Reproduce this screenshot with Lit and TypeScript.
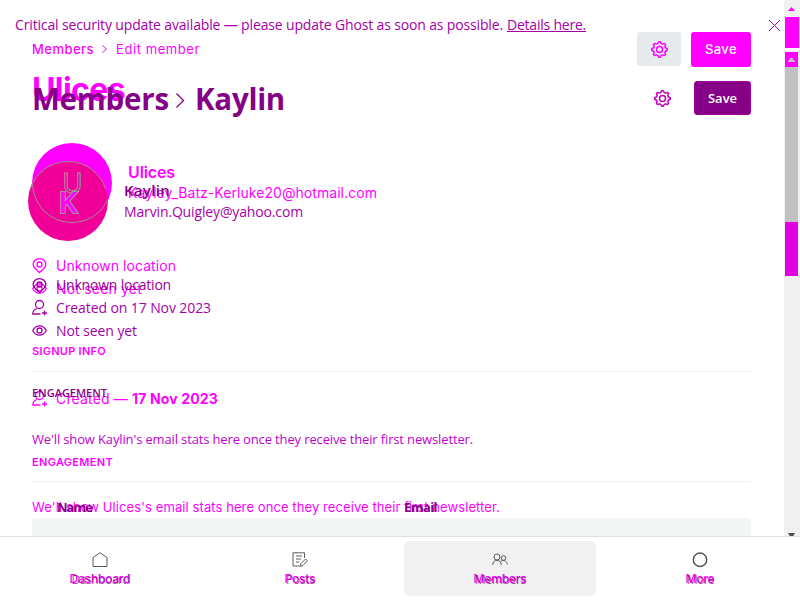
import { LitElement, html, css, svg } from "lit";
import { customElement, property } from "lit/decorators.js";

/* A single line of text whose tracking is computed so that it spans a given width. */
@customElement("fit-text")
class FitText extends LitElement {
  @property({ type: Number }) span = 0;
  @property() text = "";
  static styles = css`
    :host { display: block; flex: none; white-space: pre; line-height: 20px; height: 20px; }
    span { display: inline-block; text-decoration: inherit; }
  `;
  render() {
    return html`<span>${this.text}</span>`;
  }
  updated() {
    const el = this.renderRoot.querySelector("span") as HTMLElement;
    el.style.letterSpacing = "0px";
    const w = el.getBoundingClientRect().width;
    el.style.letterSpacing = `${(this.span - w) / this.text.length}px`;
  }
}

const t = (text: string, span: number, cls = "") =>
  html`<fit-text class=${cls} .text=${text} .span=${span}></fit-text>`;

const gearPath = () => {
  let d = "";
  const n = 8;
  for (let i = 0; i < n * 4; i++) {
    const a = ((i - 0.5) / (n * 4)) * Math.PI * 2;
    const r = i % 4 < 2 ? 7.8 : 6.1;
    d += `${i ? "L" : "M"}${(8.5 + r * Math.cos(a)).toFixed(2)} ${(8.5 + r * Math.sin(a)).toFixed(2)}`;
  }
  return d + "Z";
};
const gear = html`<svg class="gear" viewBox="0 0 17 17"><path d=${gearPath()} stroke-linejoin="round"/><circle cx="8.5" cy="8.5" r="3"/></svg>`;
const icons = {
  pin: svg`<path d="M7.500 14.500C4.600 11.800 1.200 9.600 1.200 6.500A6.300 5.900 0 0 1 13.800 6.500C13.800 9.600 10.400 11.800 7.500 14.500Z"/><circle cx="7.500" cy="6.500" r="2.500"/>`,
  user: svg`<circle cx="7.500" cy="4.500" r="4"/><path d="M5 8.500C2 9.500 .8 11.500 .8 14H8.500M12.500 10.500v5M10 13h5"/>`,
  eye: svg`<path d="M.7 7.500C4 1.300 11 1.300 14.300 7.500C11 13.700 4 13.700 .7 7.500Z"/><circle cx="7.500" cy="7.500" r="2.500"/>`,
};
const icon = (k: keyof typeof icons) => html`<svg class="icon" viewBox="0 0 15 16">${icons[k]}</svg>`;

@customElement("app-root")
class AppRoot extends LitElement {
  static styles = css`
    :host { display: block; position: relative; width: 800px; height: 600px; overflow: hidden; background: #fff; }
    svg { display: block; flex: none; fill: none; stroke: currentColor; overflow: visible; }
    .layer { position: absolute; inset: 0; display: flex; flex-direction: column; box-sizing: border-box; padding-left: 32px; }
    .next { color: #f0f; font-family: Inter, sans-serif; font-size: 14px; padding-top: 32px; }
    .prev { color: #a500a8; font-family: "Open Sans", sans-serif; font-size: 14px; padding-top: 15px; }
    .row { display: flex; align-items: center; height: 20px; flex: none; }
    .s11 { font-size: 11px; font-weight: 600; }
    .s13 { font-size: 13px; }
    .bold { font-weight: 700; }
    .semi { font-weight: 600; }
    .med { font-weight: 500; }
    .gear { width: 17px; height: 17px; stroke-width: 1.5; }
    .icon { width: 15px; height: 16px; stroke-width: 1.3; margin-right: 9px; }
    .rule { height: 1px; width: 719px; background: #f0f1f1; flex: none; }
    .chev { width: 5px; height: 8px; }

    .next .bar { display: flex; height: 34px; width: 719px; align-items: center; flex: none; }
    .next .chev { margin: 0 9px 0 8px; }
    .btn { display: flex; align-items: center; justify-content: center; box-sizing: border-box; color: #fff; }
    .tool { width: 44px; height: 34px; background: #e6eaed; color: #f0f; border-radius: 3px; margin-left: auto; margin-right: 10px; }
    .save { width: 60px; height: 35px; background: #f0f; border-radius: 3px; }
    .next .title { font-size: 32px; font-weight: 700; margin-top: 14px; }
    .next .name { font-size: 16px; font-weight: 600; margin: 62px 0 0 96px; }
    .next .mail { margin-left: 96px; margin-top: 1px; }
    .next .loc { margin-top: 53px; }
    .next .seen { margin-top: 3px; }
    .next .signup { margin-top: 42px; }
    .next .r1 { margin-top: 10px; }
    .next .made { margin-top: 17px; }
    .next .made .bold { margin-left: 4px; }
    .next .eng { margin-top: 43px; }
    .next .r2 { margin-top: 9px; }
    .next .msg { margin-top: 15px; }
    .panel { width: 719px; height: 20px; background: #f4f6f6; border-radius: 3px 3px 0 0; flex: none; margin-top: 1px; }

    .prev .alert { margin-left: -17px; }
    .prev .link { margin-left: 4px; text-decoration: underline; }
    .x { width: 11px; height: 11px; margin-left: 183px; }
    .prev .head { height: 34px; width: 719px; margin-top: 46px; color: #850087; }
    .prev .head .big { font-size: 29.500px; font-weight: 700; margin-top: 1px; }
    .prev .head .chev { width: 8px; height: 15px; margin: 4px 11px 0 7px; stroke-width: 1.300; }
    .prev .head .gear { margin-left: auto; margin-right: 23px; color: #c000c0; }
    .prev .save { width: 57px; height: 34px; background: #850087; border: 1px solid #a000a2; }
    .prev .name { font-size: 15px; font-weight: 600; margin: 65px 0 0 92px; color: #850087; }
    .prev .mail { font-size: 14px; margin: 2px 0 0 92px; }
    .prev .loc { margin-top: 53px; color: #980098; }
    .prev .loc svg { margin-top: 1px; }
    .prev .gap3 { margin-top: 3px; }
    .prev .eng { margin-top: 42px; color: #850087; }
    .prev .msg { margin-top: 26px; color: #c000d0; }
    .prev .cols { margin-top: 48px; padding-left: 25px; color: #850087; }
    .prev .cols .mailcol { margin-left: 312px; }

    .avatars { position: absolute; left: 28px; top: 143px; width: 84px; height: 98px; }
    .avatars .a { fill: #f0f; stroke: none; }
    .avatars .b { fill: #f00098; stroke: none; }
    .avatars .ring { stroke: #a58a9c; stroke-width: 1; }
    .avatars .u { font: 400 27px Inter, sans-serif; stroke: #999; fill: #f00098; }
    .avatars .k { font: 600 29px "Open Sans", sans-serif; stroke: #999; stroke-width: 2; fill: #f0f; paint-order: stroke; }

    .scroll { position: absolute; right: 0; top: 0; width: 16px; height: 536px; background: #f0f0f0; display: flex; flex-direction: column; align-items: flex-start; box-sizing: border-box; padding: 7px 0 0 1px; }
    .up { width: 7px; height: 4px; margin: 0 0 6px 3px; background: #f0f; clip-path: polygon(50% 0, 100% 100%, 0 100%); }
    .t1 { width: 14px; height: 31px; background: #f0f; }
    .split { width: 16px; height: 2px; background: #fff; margin: 0 0 2px -1px; }
    .t2 { width: 13px; height: 15px; background: #f0f; display: flex; justify-content: center; align-items: center; }
    .t2 i { width: 8px; height: 5px; background: #c1c1c1; clip-path: polygon(50% 0, 100% 100%, 0 100%); }
    .t3 { width: 13px; height: 155px; background: #c1c1c1; }
    .t4 { width: 13px; height: 54px; background: #e000e0; }
    .down { width: 7px; height: 3px; background: #505050; margin: 257px 0 0 3px; clip-path: polygon(0 0, 100% 0, 75% 100%, 25% 100%); }

    .nav { position: absolute; left: 0; right: 0; bottom: 0; height: 64px; box-sizing: border-box; border-top: 1px solid #dcdfe2; background: #fff; display: grid; grid-template-columns: repeat(4, 1fr); padding-top: 4px; }
    .tab { margin: 0 4px; height: 55px; border-radius: 5px; display: flex; flex-direction: column; align-items: center; color: #565b61; padding-top: 11px; box-sizing: border-box; }
    .tab.on { background: #f2f2f2; }
    .tab svg { width: 16px; height: 16px; }
    .label { display: grid; justify-items: center; margin-top: 1px; font-size: 12px; }
    .label fit-text { grid-area: 1 / 1; }
    .la { color: #f0f; font-family: Inter, sans-serif; font-weight: 500; }
    .lb { color: #85108a; font-family: "Open Sans", sans-serif; opacity: .75; margin: 1px 0 -1px 1px; }
  `;

  tab(label: string, a: number, b: number, glyph: unknown, on = false) {
    return html`<div class="tab ${on ? "on" : ""}">
      <svg viewBox="0 0 16 16">${glyph}</svg>
      <div class="label">${t(label, a, "la")}${t(label, b, "lb")}</div>
    </div>`;
  }

  render() {
    const chev = html`<svg class="chev" viewBox="0 0 5 8"><path d="M.5 .5L4.500 4L.5 7.500"/></svg>`;
    return html`
      <div class="layer next">
        <div class="bar">
          ${t("Members", 62, "s13 med")}${chev}${t("Edit member", 84, "s13")}
          <div class="btn tool">${gear}</div>
          <div class="btn save">${t("Save", 32, "s13 med")}</div>
        </div>
        ${t("Ulices", 93, "title")}
        ${t("Ulices", 47, "name")}
        ${t("Kayley_Batz-Kerluke20@hotmail.com", 249, "mail")}
        <div class="row loc">${icon("pin")}${t("Unknown location", 120)}</div>
        <div class="row seen">${icon("eye")}${t("Not seen yet", 86)}</div>
        ${t("SIGNUP INFO", 74, "s11 signup")}
        <div class="rule r1"></div>
        <div class="row made">${icon("user")}${t("Created —", 72)}${t("17 Nov 2023", 86, "bold")}</div>
        ${t("ENGAGEMENT", 81, "s11 eng")}
        <div class="rule r2"></div>
        ${t("We'll show Ulices's email stats here once they receive their first newsletter.", 468, "s13 msg")}
        <div class="panel"></div>
      </div>

      <div class="layer prev">
        <div class="row alert">
          ${t("Critical security update available — please update Ghost as soon as possible.", 488)}
          ${t("Details here.", 79, "link")}
          <svg class="x" viewBox="0 0 11 11"><path d="M0 0L11 11M11 0L0 11"/></svg>
        </div>
        <div class="row head">
          ${t("Members", 137, "big")}
          <svg class="chev" viewBox="0 0 8 15"><path d="M.5 .5L7.500 7.500L.5 14.500"/></svg>
          ${t("Kaylin", 90, "big")}
          ${gear}
          <div class="btn save">${t("Save", 29, "semi s13")}</div>
        </div>
        ${t("Kaylin", 46, "name")}
        ${t("Marvin.Quigley@yahoo.com", 179, "mail")}
        <div class="row loc">${icon("pin")}${t("Unknown location", 115)}</div>
        <div class="row gap3">${icon("user")}${t("Created on 17 Nov 2023", 155)}</div>
        <div class="row gap3">${icon("eye")}${t("Not seen yet", 81)}</div>
        ${t("ENGAGEMENT", 75, "s11 eng")}
        ${t("We'll show Kaylin's email stats here once they receive their first newsletter.", 441, "s13 msg")}
        <div class="row cols">${t("Name", 35, "s13 bold")}${t("Email", 33, "s13 bold mailcol")}</div>
      </div>

      <svg class="avatars" viewBox="0 0 84 98">
        <defs><clipPath id="in"><circle cx="40" cy="58" r="40"/></clipPath></defs>
        <circle class="a" cx="44" cy="40" r="40"/>
        <circle class="b" cx="40" cy="58" r="40"/>
        <circle class="ring" cx="44" cy="40" r="39.500" clip-path="url(#in)"/>
        <circle class="ring" cx="40" cy="58" r="39.500" stroke-dasharray="100 148" stroke-dashoffset="-136"/>
        <text class="u" x="34.500" y="50">U</text>
        <text class="k" x="30.500" y="69.500" textLength="19" lengthAdjust="spacingAndGlyphs">K</text>
      </svg>

      <div class="scroll">
        <div class="up"></div><div class="t1"></div><div class="split"></div>
        <div class="t2"><i></i></div><div class="t3"></div><div class="t4"></div><div class="down"></div>
      </div>

      <nav class="nav">
        ${this.tab("Dashboard", 61, 58, svg`<path d="M1 5.500L8 .7L15 5.500V14.500H1Z"/>`)}
        ${this.tab("Posts", 31, 29, svg`<path d="M12.500 6V.8H1V14H7.500M4 4h6M4 7h5M4 10h3M8 14.500L9 11.500L13.500 7L15.300 8.800L11 13.500Z"/>`)}
        ${this.tab("Members", 53, 51, svg`<circle cx="5" cy="5" r="3"/><circle cx="11.500" cy="6" r="2.300"/><path d="M.7 13C.7 10 2.500 8.300 5 8.300S9.300 10 9.300 13M9 9.200C12 7.300 15.300 9.500 15.300 12.500"/>`, true)}
        ${this.tab("More", 29, 27, svg`<circle cx="8" cy="7.700" r="6.700" stroke-width="1.500"/>`)}
      </nav>
    `;
  }
}
